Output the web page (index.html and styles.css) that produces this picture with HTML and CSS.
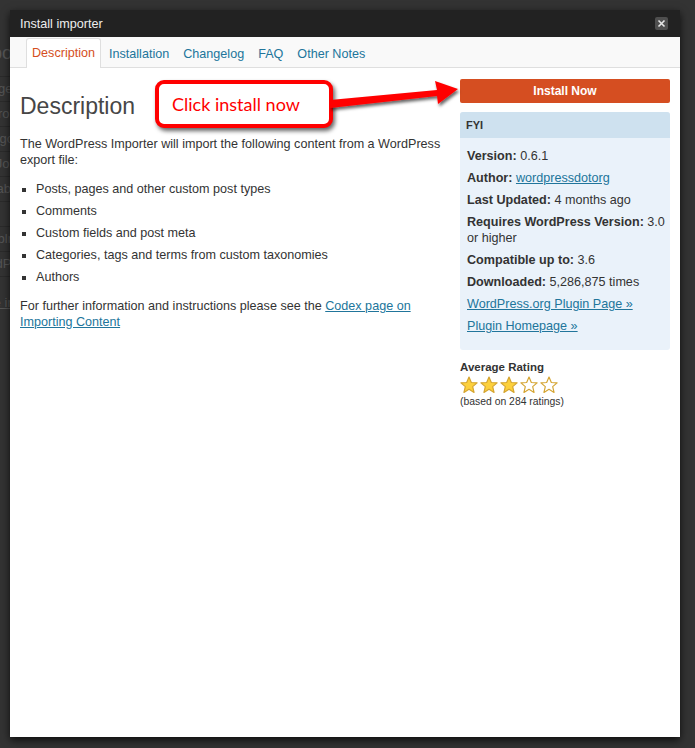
FILE: index.html
```html
<!DOCTYPE html>
<html>
<head>
<meta charset="utf-8">
<link rel="stylesheet" href="styles.css">
</head>
<body>
<div class="backdrop">
  <div class="bd-row bd-first">Import</div>
  <div class="bd-row">Blogger</div>
  <div class="bd-row">Blogroll</div>
  <div class="bd-row">Categories</div>
  <div class="bd-row">LiveJournal</div>
  <div class="bd-row">Movable</div>
  <div class="bd-row">RSS</div>
  <div class="bd-row">Tumblr</div>
  <div class="bd-row">WordPress</div>
  <div class="bd-row bd-link">If the importer</div>
</div>
<div class="modal">
  <div class="titlebar">
    <span class="title">Install importer</span>
    <span class="close"><svg width="13" height="13" viewBox="0 0 13 13"><path d="M3.5 3.5 L9.5 9.5 M9.5 3.5 L3.5 9.5" stroke="#e6e6e6" stroke-width="1.6" fill="none"/></svg></span>
  </div>
  <div class="tabs">
    <span class="tab active">Description</span>
    <span class="tab">Installation</span>
    <span class="tab">Changelog</span>
    <span class="tab">FAQ</span>
    <span class="tab">Other Notes</span>
  </div>
  <div class="body">
    <div class="main">
      <h2 class="heading">Description</h2>
      <p class="para">The WordPress Importer will import the following content from a WordPress export file:</p>
      <ul class="list">
        <li>Posts, pages and other custom post types</li>
        <li>Comments</li>
        <li>Custom fields and post meta</li>
        <li>Categories, tags and terms from custom taxonomies</li>
        <li>Authors</li>
      </ul>
      <p class="para">For further information and instructions please see the <a class="link" href="#">Codex page on Importing Content</a></p>
    </div>
    <div class="side">
      <a class="install" href="#">Install Now</a>
      <div class="fyi">
        <div class="fyi-head">FYI</div>
        <ul class="fyi-list">
          <li><b>Version:</b> 0.6.1</li>
          <li><b>Author:</b> <a class="link" href="#">wordpressdotorg</a></li>
          <li><b>Last Updated:</b> 4 months ago</li>
          <li><b>Requires WordPress Version:</b> 3.0 or higher</li>
          <li><b>Compatible up to:</b> 3.6</li>
          <li><b>Downloaded:</b> 5,286,875 times</li>
          <li><a class="link" href="#">WordPress.org Plugin Page »</a></li>
          <li><a class="link" href="#">Plugin Homepage »</a></li>
        </ul>
      </div>
      <div class="rating-title">Average Rating</div>
      <div class="stars">
        <svg width="18" height="18" viewBox="0 0 20 20"><path class="star-full" d="M10 1.2 L12.6 7.2 L19 7.6 L14.1 11.8 L15.6 18.2 L10 14.8 L4.4 18.2 L5.9 11.8 L1 7.6 L7.4 7.2 Z"/></svg>
        <svg width="18" height="18" viewBox="0 0 20 20"><path class="star-full" d="M10 1.2 L12.6 7.2 L19 7.6 L14.1 11.8 L15.6 18.2 L10 14.8 L4.4 18.2 L5.9 11.8 L1 7.6 L7.4 7.2 Z"/></svg>
        <svg width="18" height="18" viewBox="0 0 20 20"><path class="star-full" d="M10 1.2 L12.6 7.2 L19 7.6 L14.1 11.8 L15.6 18.2 L10 14.8 L4.4 18.2 L5.9 11.8 L1 7.6 L7.4 7.2 Z"/></svg>
        <svg width="18" height="18" viewBox="0 0 20 20"><path class="star-empty" d="M10 1.2 L12.6 7.2 L19 7.6 L14.1 11.8 L15.6 18.2 L10 14.8 L4.4 18.2 L5.9 11.8 L1 7.6 L7.4 7.2 Z"/></svg>
        <svg width="18" height="18" viewBox="0 0 20 20"><path class="star-empty" d="M10 1.2 L12.6 7.2 L19 7.6 L14.1 11.8 L15.6 18.2 L10 14.8 L4.4 18.2 L5.9 11.8 L1 7.6 L7.4 7.2 Z"/></svg>
      </div>
      <div class="rating-count">(based on 284 ratings)</div>
    </div>
  </div>
  <div class="callout">Click install now</div>
  <svg class="arrow" width="140" height="40" viewBox="0 0 140 40">
    <defs>
      <filter id="sh" x="-20%" y="-50%" width="140%" height="200%">
        <feDropShadow dx="1.5" dy="2.5" stdDeviation="1.5" flood-color="#000" flood-opacity="0.6"/>
      </filter>
    </defs>
    <polygon filter="url(#sh)" fill="#ff0000" points="0,22 107,12 105,3 128,11 108,26 107,18 0,30"/>
  </svg>
</div>
</body>
</html>
```
FILE: styles.css
```css
html, body {
  margin: 0;
  padding: 0;
}
body {
  background: #333333;
  font-family: "Liberation Sans", Arial, sans-serif;
  position: relative;
  width: 695px;
  height: 748px;
  overflow: hidden;
}
.backdrop {
  position: absolute;
  left: -30px;
  top: 40px;
  width: 200px;
  color: #555555;
  font-size: 13px;
}
.bd-row {
  height: 24px;
  line-height: 24px;
  border-bottom: 1px solid #2a2a2a;
  padding-left: 2px;
}
.bd-first {
  height: 36px;
  line-height: 26px;
  font-size: 18px;
}
.bd-link {
  border-bottom: none;
  margin-top: 14px;
  text-decoration: underline;
}
.modal {
  position: absolute;
  left: 10px;
  top: 10px;
  width: 670px;
  height: 727px;
  background: #ffffff;
  box-shadow: 0 3px 8px rgba(0, 0, 0, 0.75);
  display: flex;
  flex-direction: column;
}
.titlebar {
  height: 27px;
  background: #222222;
  display: flex;
  align-items: center;
  justify-content: space-between;
  padding: 0 12px 0 10px;
}
.title {
  color: #eeeeee;
  font-size: 12.6px;
}
.close {
  width: 13px;
  height: 13px;
  background: #4f4f4f;
  border-radius: 2px;
  display: flex;
}
.tabs {
  height: 30px;
  background: #f9f9f9;
  border-bottom: 1px solid #dfdfdf;
  display: flex;
  align-items: flex-end;
  padding-left: 16px;
}
.tab {
  color: #21759b;
  font-size: 12.6px;
  height: 28px;
  line-height: 28px;
  padding: 0 5px;
  margin-right: 2px;
  border: 1px solid transparent;
  border-bottom: none;
  margin-bottom: -1px;
}
.tab.active {
  color: #d54e21;
  background: #ffffff;
  border-color: #dfdfdf;
  border-radius: 3px 3px 0 0;
  height: 29px;
}
.body {
  display: flex;
  gap: 10px;
  padding: 11px 10px 0 10px;
}
.main {
  flex: 1;
  color: #333333;
  font-size: 12.6px;
  line-height: 16px;
}
.heading {
  margin: 0;
  padding: 13px 0 0 0;
  font-weight: normal;
  font-size: 23px;
  line-height: 29px;
  color: #464646;
}
.para {
  margin: 15px 0 0 0;
}
.list {
  margin: 13px 0 13px 0;
  padding-left: 16px;
  list-style: square;
}
.list li {
  margin-bottom: 6px;
}
.list li:last-child {
  margin-bottom: 0;
}
.list + .para {
  margin-top: 0;
}
.link {
  color: #21759b;
  text-decoration: underline;
}
.side {
  width: 210px;
  flex: none;
  display: flex;
  flex-direction: column;
}
.install {
  display: block;
  height: 24px;
  line-height: 24px;
  background: #d54e21;
  color: #ffffff;
  font-weight: bold;
  font-size: 12px;
  text-align: center;
  text-decoration: none;
  border-radius: 2px;
}
.fyi {
  margin-top: 9px;
  background: #eaf2fa;
  border-radius: 3px;
  overflow: hidden;
}
.fyi-head {
  background: #cee1ef;
  height: 26px;
  line-height: 26px;
  padding-left: 6px;
  font-size: 11px;
  font-weight: bold;
  color: #333333;
}
.fyi-list {
  list-style: none;
  margin: 0;
  padding: 10px 1px 10px 7px;
  font-size: 12.6px;
  line-height: 16px;
  color: #333333;
}
.fyi-list li {
  margin-bottom: 6px;
}
.rating-title {
  margin-top: 10px;
  font-size: 11.5px;
  font-weight: bold;
  color: #333333;
  line-height: 14px;
}
.stars {
  display: flex;
  gap: 2px;
  margin-top: 2px;
}
.star-full {
  fill: #fcd03c;
  stroke: #d4a431;
  stroke-width: 1.3;
  stroke-linejoin: round;
}
.star-empty {
  fill: #ffffff;
  stroke: #d4a431;
  stroke-width: 1.3;
  stroke-linejoin: round;
}
.rating-count {
  font-size: 10.4px;
  color: #333333;
  line-height: 12px;
  margin-top: 2px;
}
.callout {
  position: absolute;
  left: 145px;
  top: 70px;
  height: 40px;
  border: 4px solid #ff0000;
  border-radius: 9px;
  background: #ffffff;
  box-shadow: 2px 3px 4px rgba(0, 0, 0, 0.6);
  color: #ff0000;
  font-family: Lato, "Open Sans", sans-serif;
  font-size: 18px;
  line-height: 40px;
  padding-left: 13px;
  box-sizing: content-box;
  width: 157px;
}
.arrow {
  position: absolute;
  left: 320px;
  top: 68px;
}
```
